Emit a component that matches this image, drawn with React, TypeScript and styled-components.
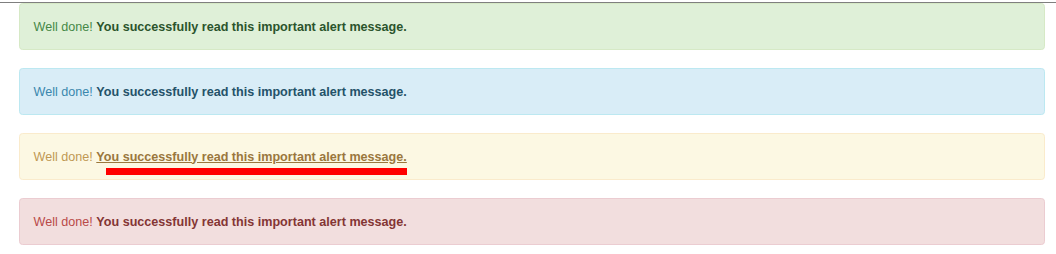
import React, { ReactElement } from 'react';
import styled, { createGlobalStyle, css } from 'styled-components';

type Variant = 'success' | 'info' | 'warning' | 'danger';

const PALETTE: Record<Variant, { bg: string; border: string; text: string; link: string }> = {
  success: { bg: '#dff0d8', border: '#d6e9c6', text: '#468847', link: '#2b542c' },
  info: { bg: '#d9edf7', border: '#bce8f1', text: '#3a87ad', link: '#245269' },
  warning: { bg: '#fcf8e3', border: '#faebcc', text: '#c09853', link: '#66512c' },
  danger: { bg: '#f2dede', border: '#ebccd1', text: '#b94a48', link: '#843534' },
};

const ALERTS: { variant: Variant; hovered?: boolean }[] = [
  { variant: 'success' },
  { variant: 'info' },
  { variant: 'warning', hovered: true },
  { variant: 'danger' },
];

function App(): ReactElement {
  return (
    <>
      <GlobalStyle />
      <Page>
        {ALERTS.map(({ variant, hovered }) => (
          <Alert key={variant} variant={variant}>
            Well done!{' '}
            <AlertLink href="#" variant={variant} hovered={!!hovered}>
              You successfully read this important alert message.
            </AlertLink>
            {hovered && <Marker />}
          </Alert>
        ))}
      </Page>
    </>
  );
}

const GlobalStyle = createGlobalStyle`
  html, body {
    margin: 0;
    padding: 0;
    background: #fff;
  }
  body {
    padding-top: 2px;
    font-family: "Liberation Sans", Arial, Helvetica, sans-serif;
  }
`;

const Page = styled.div`
  border-top: 1px solid #7f7f7f;
  padding: 0 11px 0 19px;
  display: flex;
  flex-direction: column;
  gap: 18px;
`;

const Alert = styled.div<{ variant: Variant }>`
  position: relative;
  padding: 13.5px;
  border: 1px solid ${({ variant }) => PALETTE[variant].border};
  border-radius: 3.6px;
  background-color: ${({ variant }) => PALETTE[variant].bg};
  color: ${({ variant }) => PALETTE[variant].text};
  font-size: 12.6px;
  line-height: 18px;
`;

const AlertLink = styled.a<{ variant: Variant; hovered: boolean }>`
  font-weight: 700;
  color: ${({ variant }) => PALETTE[variant].link};
  text-decoration: none;
  ${({ hovered }) =>
    hovered &&
    css`
      color: #9a773d;
      text-decoration: underline;
    `}
`;

// red annotation bar drawn over the warning alert
const Marker = styled.span`
  position: absolute;
  left: 86px;
  top: 34px;
  width: 301px;
  height: 7px;
  background: #ff0000;
`;

export default App;
